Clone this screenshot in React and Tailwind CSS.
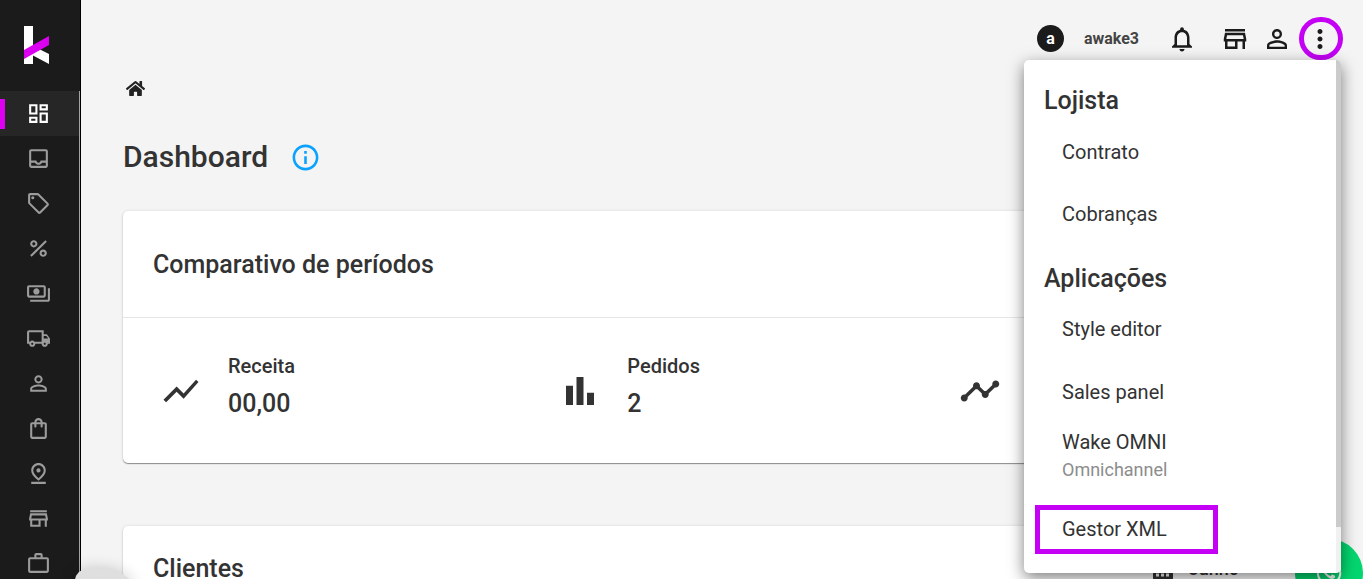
import {
  MdOutlineDashboard, MdOutlineInbox, MdOutlineSell, MdPercent, MdOutlinePayments,
  MdOutlineLocalShipping, MdPersonOutline, MdOutlineShoppingBag, MdOutlinePinDrop,
  MdOutlineStore, MdWorkOutline, MdNotificationsNone, MdMoreVert, MdInfoOutline,
  MdShowChart, MdBarChart, MdTimeline, MdExpandMore,
} from "react-icons/md";
import { FaHome, FaWhatsapp } from "react-icons/fa";

const nav = [
  { label: "Dashboard", Icon: MdOutlineDashboard, active: true },
  { label: "Pedidos", Icon: MdOutlineInbox },
  { label: "Produtos", Icon: MdOutlineSell },
  { label: "Promoções", Icon: MdPercent },
  { label: "Pagamentos", Icon: MdOutlinePayments },
  { label: "Fretes", Icon: MdOutlineLocalShipping },
  { label: "Clientes", Icon: MdPersonOutline },
  { label: "Compras", Icon: MdOutlineShoppingBag },
  { label: "Endereços", Icon: MdOutlinePinDrop },
  { label: "Loja", Icon: MdOutlineStore },
  { label: "Negócios", Icon: MdWorkOutline },
];

const stats = [
  { label: "Receita", value: "00,00", Icon: MdShowChart },
  { label: "Pedidos", value: "2", Icon: MdBarChart },
  { label: "", value: "", Icon: MdTimeline },
];

function Logo() {
  return (
    <svg viewBox="0 0 25 38" className="h-[38px] w-[25px]" aria-hidden="true">
      <rect width="9" height="38" fill="#fff" />
      <path d="M9 27 L16 23.5 L25 28 V38 L9 29.5 Z" fill="#fff" />
      <path d="M0 24 L25 10 V19 L0 33 Z" fill="#db00f0" />
    </svg>
  );
}

function CalendarIcon() {
  return (
    <svg viewBox="0 0 20 22" className="h-[22px] w-5" fill="none" aria-hidden="true">
      <path d="M5 0v5M15 0v5" stroke="#333" strokeWidth="2" />
      <rect y="3" width="20" height="19" rx="2" fill="#333" />
      <path d="M3 11h3M8 11h3M13 11h3M3 17h3M8 17h3M13 17h3" stroke="#fff" strokeWidth="3" />
    </svg>
  );
}

function Sidebar() {
  return (
    <aside className="flex w-[81px] shrink-0 flex-col border-r border-black bg-[#1b1b1b]">
      <a href="#" aria-label="Início" className="flex h-[91px] shrink-0 items-start pt-[26px] pl-6">
        <Logo />
      </a>
      <nav className="flex flex-col border-r border-[#a3a3a3]">
        {nav.map(({ label, Icon, active }) => (
          <a
            key={label}
            href="#"
            aria-label={label}
            className={
              active
                ? "flex h-[45px] items-center bg-[#262626] text-white"
                : "flex h-[45px] items-center text-[#9c9c9c]"
            }
          >
            <span className={active ? "h-[30px] w-[5px] bg-[#db00f0]" : "h-[30px] w-[5px]"} />
            <Icon className="ml-[21px] size-[25px]" />
          </a>
        ))}
      </nav>
    </aside>
  );
}

function Header() {
  return (
    <header className="flex h-[77px] items-center justify-end pr-5 text-[#1b1b1b]">
      <span className="flex size-[27px] items-center justify-center rounded-full bg-[#1b1b1b] text-base leading-none font-bold text-white">
        a
      </span>
      <span className="ml-5 text-base font-bold text-[#444]">awake3</span>
      <button aria-label="Notificações" className="ml-7">
        <MdNotificationsNone className="size-[30px]" />
      </button>
      <button aria-label="Loja" className="ml-[23px]">
        <MdOutlineStore className="size-[30px]" />
      </button>
      <button aria-label="Perfil" className="ml-3">
        <MdPersonOutline className="size-[30px]" />
      </button>
      <button
        aria-label="Mais opções"
        className="ml-[7px] flex h-[43px] w-11 items-center justify-center rounded-full border-5 border-[#c400f5] pr-0.5"
      >
        <MdMoreVert className="size-[30px] shrink-0" />
      </button>
    </header>
  );
}

function Menu() {
  return (
    <div className="absolute top-[60px] right-[22px] flex h-[513px] w-[317px] overflow-hidden rounded-[5px] bg-white text-[#333] shadow-[0_5px_16px_rgba(0,0,0,0.5)]">
      <div className="flex-1 pt-[22px]">
        <h2 className="pl-5 text-[25px] leading-[38px] font-medium">Lojista</h2>
        <ul className="pl-[38px] text-xl">
          <li className="flex h-16 items-center"><a href="#">Contrato</a></li>
          <li className="flex h-[60px] items-center"><a href="#">Cobranças</a></li>
        </ul>
        <h2 className="mt-4 pl-5 text-[25px] leading-[38px] font-medium">Aplicações</h2>
        <ul className="text-xl">
          <li className="flex h-[62px] items-center pl-[38px]"><a href="#">Style editor</a></li>
          <li className="flex h-16 items-center pl-[38px]"><a href="#">Sales panel</a></li>
          <li className="pt-1 pl-[38px]">
            <a href="#" className="block leading-7">
              Wake OMNI
              <span className="block text-lg leading-[27px] text-[#8c8c8c]">Omnichannel</span>
            </a>
          </li>
          <li className="mt-[22px] ml-[11px]">
            <a href="#" className="flex h-[49px] w-[183px] items-center border-5 border-[#c400f5] pb-0.5 pl-[22px]">
              Gestor XML
            </a>
          </li>
        </ul>
      </div>
      <div className="w-[5px] bg-[#f1f1f1]">
        <div className="h-[467px] bg-[#cbcbcb]" />
      </div>
    </div>
  );
}

const card = "rounded-[5px] bg-white shadow-[0_1px_1px_rgba(0,0,0,0.4),0_0_3px_rgba(0,0,0,0.12)]";

export default function App() {
  return (
    <div className="relative flex h-screen overflow-hidden bg-[#f4f4f4] font-[Roboto,sans-serif] text-[#333]">
      <Sidebar />
      <div className="min-w-0 flex-1">
        <Header />
        <main className="px-[42px]">
          <a href="#" aria-label="Página inicial" className="flex h-[22px] items-center pl-[3px] text-[#222]">
            <FaHome className="size-[19px]" />
          </a>
          <div className="mt-[34px] flex h-12 items-center">
            <h1 className="pb-0.5 text-[30px] font-medium">Dashboard</h1>
            <button aria-label="Informações" className="ml-[22px] text-[#0aa2ff]">
              <MdInfoOutline className="size-[31px]" />
            </button>
          </div>
          <section className={`mt-[30px] ${card}`}>
            <h2 className="flex h-[107px] items-center border-b border-[#e6e6e6] px-[30px] pt-0.5 text-[25px] font-medium">
              Comparativo de períodos
            </h2>
            <div className="grid h-[145px] grid-cols-3">
              {stats.map(({ label, value, Icon }, i) => (
                <div key={i} className="flex items-center gap-[26px] pl-[37px]">
                  <Icon className="size-[42px]" />
                  <div className="pb-2.5">
                    <div className="text-xl leading-9 font-medium">{label}</div>
                    <div className="text-[25px] leading-10 font-medium">{value}</div>
                  </div>
                </div>
              ))}
            </div>
          </section>
          <section className={`mt-[63px] flex h-[85px] items-center justify-between px-[30px] ${card}`}>
            <h2 className="text-[25px] font-medium">Clientes</h2>
            <button className="flex items-center gap-4 pr-3 text-lg font-medium">
              <CalendarIcon />
              Junho
              <MdExpandMore className="size-6" />
            </button>
          </section>
        </main>
      </div>
      <div className="absolute top-[569px] left-[75px] h-5 w-[58px] rounded-tl-[12px] rounded-tr-[36px_18px] bg-[#dfdfdf] shadow-[0_0_16px_rgba(0,0,0,0.2)]" />
      <button
        aria-label="WhatsApp"
        className="absolute top-[539px] right-0 flex size-[68px] items-center justify-center rounded-full bg-[#04d66f] text-white"
      >
        <FaWhatsapp className="size-7" />
      </button>
      <Menu />
    </div>
  );
}
